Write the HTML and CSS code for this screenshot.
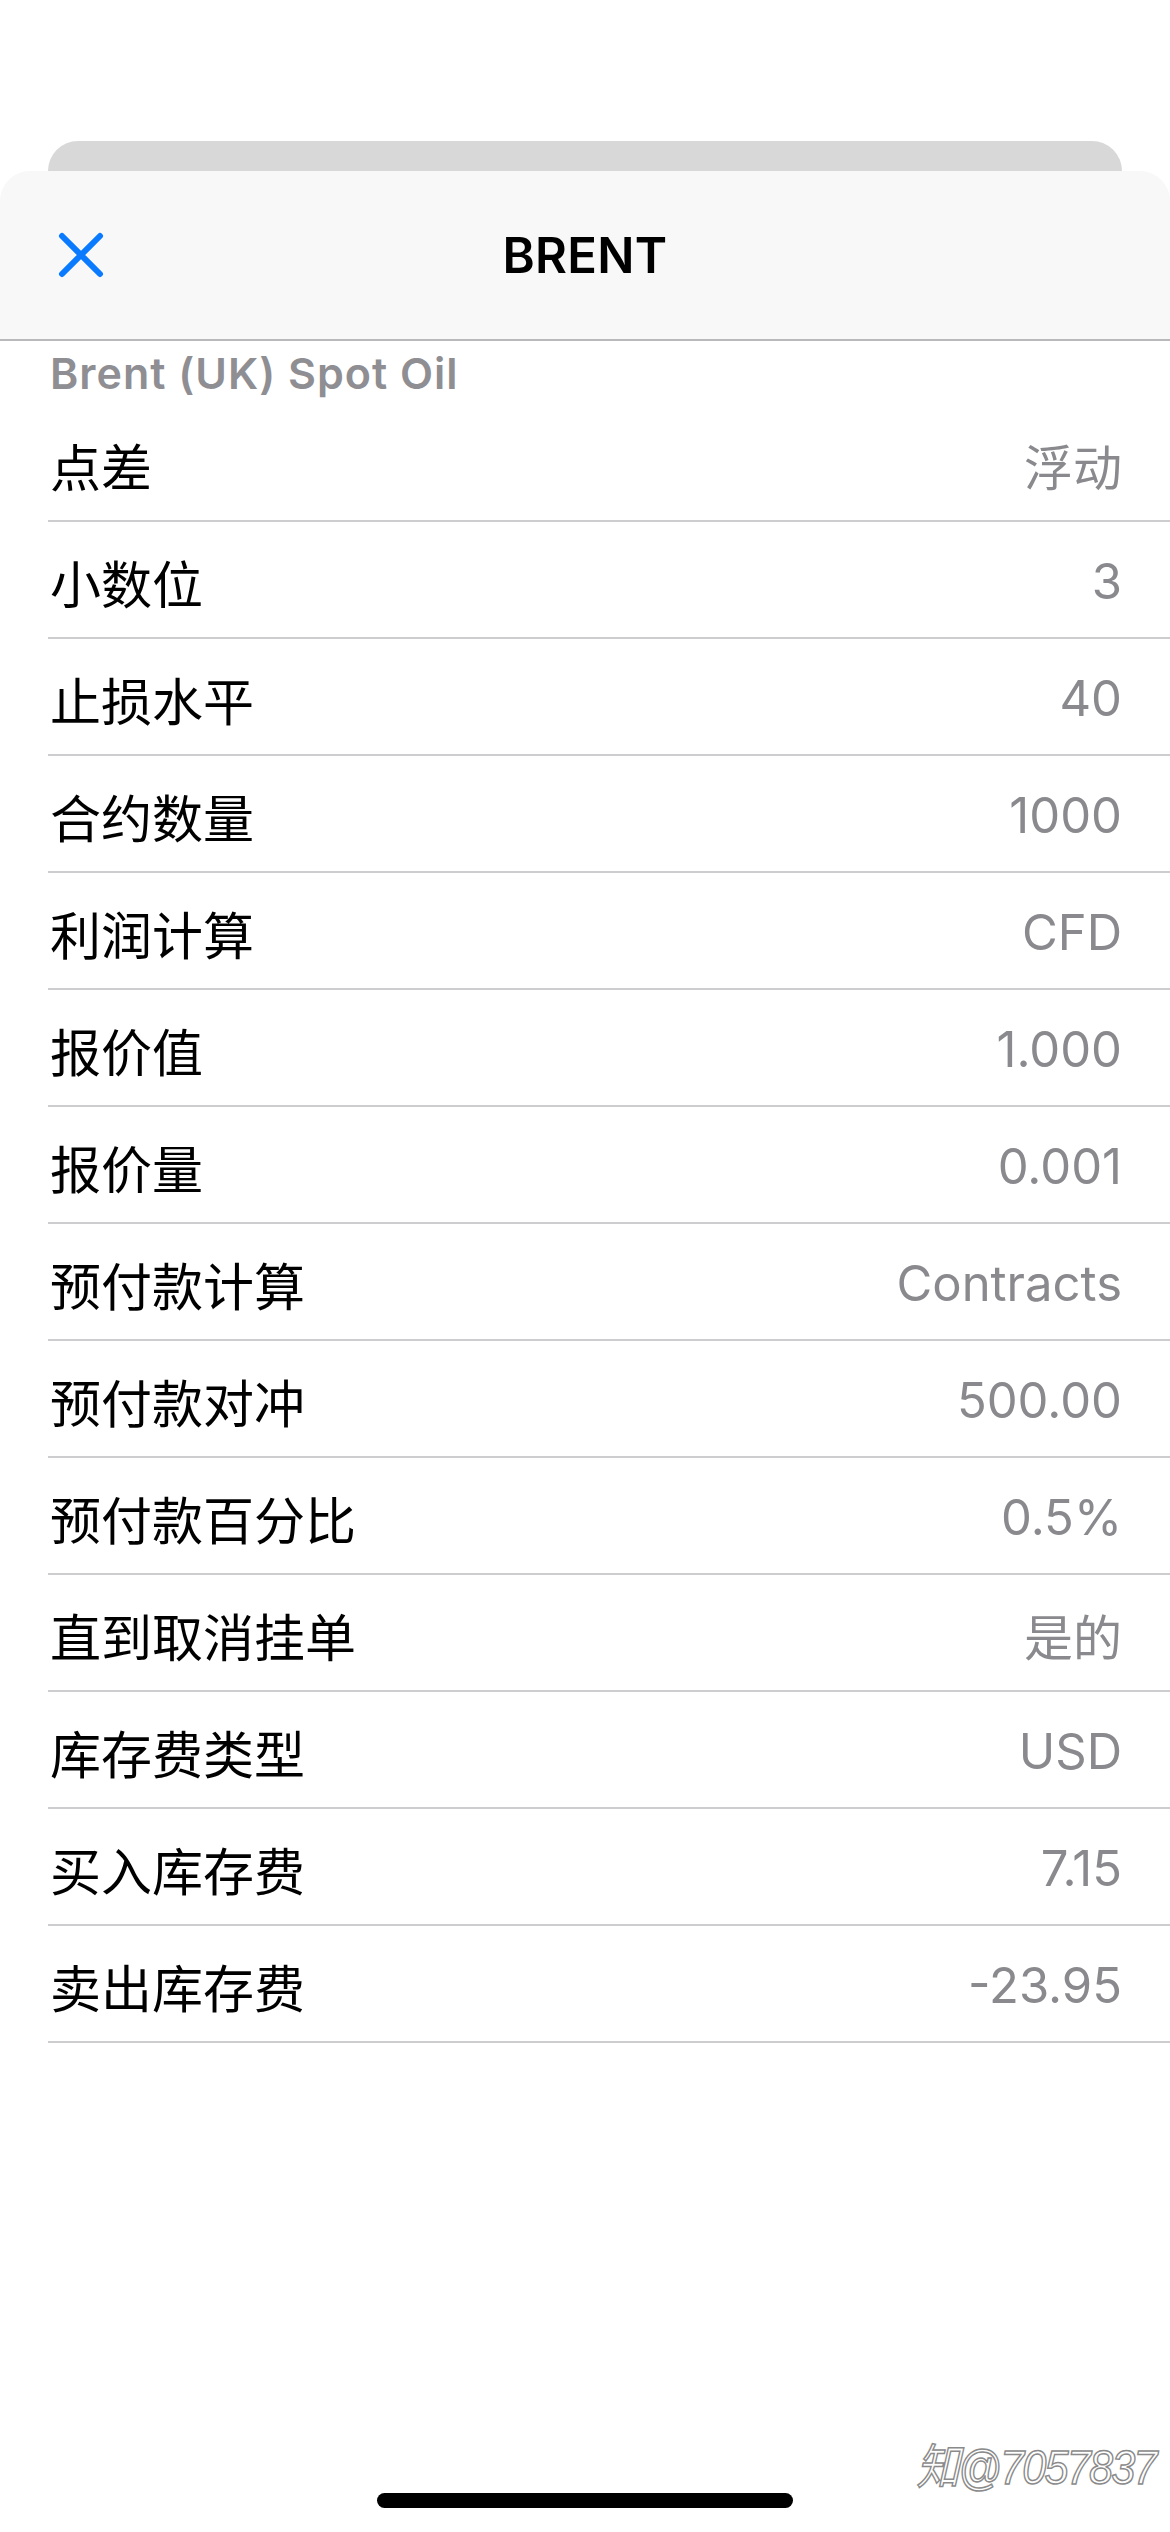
FILE: index.html
```html
<!DOCTYPE html>
<html lang="zh">
<head>
  <meta charset="UTF-8" />
  <meta name="viewport" content="width=device-width, initial-scale=1.0" />
  <title>BRENT</title>
  <link rel="stylesheet" href="styles.css">
</head>
<body>
  <div class="screen">
    <div class="back-card"></div>

    <div class="sheet">
      <div class="sheet-header">
        <button class="close-btn" aria-label="关闭">
          <svg width="46" height="46" viewBox="0 0 46 46">
            <path d="M4 4 L42 42 M42 4 L4 42" stroke="#0a7aff" stroke-width="6" stroke-linecap="round" fill="none"/>
          </svg>
        </button>
        <h1 class="title">BRENT</h1>
        <div class="header-spacer"></div>
      </div>

      <div class="subtitle">Brent (UK) Spot Oil</div>

      <div class="spec-list">
        <div class="spec-row"><span class="spec-label">点差</span><span class="spec-value">浮动</span></div>
        <div class="spec-row"><span class="spec-label">小数位</span><span class="spec-value">3</span></div>
        <div class="spec-row"><span class="spec-label">止损水平</span><span class="spec-value">40</span></div>
        <div class="spec-row"><span class="spec-label">合约数量</span><span class="spec-value">1000</span></div>
        <div class="spec-row"><span class="spec-label">利润计算</span><span class="spec-value">CFD</span></div>
        <div class="spec-row"><span class="spec-label">报价值</span><span class="spec-value">1.000</span></div>
        <div class="spec-row"><span class="spec-label">报价量</span><span class="spec-value">0.001</span></div>
        <div class="spec-row"><span class="spec-label">预付款计算</span><span class="spec-value">Contracts</span></div>
        <div class="spec-row"><span class="spec-label">预付款对冲</span><span class="spec-value">500.00</span></div>
        <div class="spec-row"><span class="spec-label">预付款百分比</span><span class="spec-value">0.5%</span></div>
        <div class="spec-row"><span class="spec-label">直到取消挂单</span><span class="spec-value">是的</span></div>
        <div class="spec-row"><span class="spec-label">库存费类型</span><span class="spec-value">USD</span></div>
        <div class="spec-row"><span class="spec-label">买入库存费</span><span class="spec-value">7.15</span></div>
        <div class="spec-row"><span class="spec-label">卖出库存费</span><span class="spec-value">-23.95</span></div>
      </div>
    </div>

    <div class="home-indicator"></div>
    <div class="watermark">知@7057837</div>
  </div>
</body>
</html>
```

FILE: styles.css
```css
* { box-sizing: border-box; }
body { margin: 0; background: #fff; font-family: Inter, "Noto Sans CJK SC", sans-serif; }

.screen { position: relative; width: 1170px; min-height: 2532px; display: flex; flex-direction: column; background: #fff; overflow: hidden; }

.back-card { margin: 141px 48px 0; height: 30px; background: #d8d8d8; border-radius: 30px 30px 0 0; }

.sheet { background: #fff; border-radius: 30px 30px 0 0; overflow: hidden; }
.sheet-header { height: 170px; display: flex; align-items: center; padding: 0 58px; background: #f8f8f8; border-bottom: 2px solid #b9b9bb; }
.close-btn { width: 46px; height: 46px; padding: 0; border: none; background: none; display: flex; }
.header-spacer { width: 46px; }
.title { flex: 1; margin: 0; text-align: center; font-size: 49px; font-weight: 600; color: #000; letter-spacing: 0.3px; }

.subtitle { padding: 7px 50px; line-height: 50px; font-size: 43px; font-weight: 600; letter-spacing: 1px; color: #8e8e93; }

.spec-list { padding-left: 48px; }
.spec-row { height: 117px; display: flex; align-items: center; justify-content: space-between; padding: 4px 48px 0 2px; border-bottom: 2px solid #cdcdd0; }
.spec-label { font-family: "Noto Sans CJK SC", sans-serif; font-size: 51px; color: #000; }
.spec-value { font-size: 49px; color: #8a8a8e; }

.home-indicator { margin: auto auto 24px; width: 416px; height: 15px; border-radius: 8px; background: #000; }

.watermark { position: absolute; right: 14px; bottom: 34px; font-family: "Liberation Sans", "Noto Sans CJK SC", sans-serif; font-size: 48px; font-style: italic; color: #fff; -webkit-text-stroke: 1.5px #8a8a8a; letter-spacing: -2px; transform: scaleX(0.9); transform-origin: right bottom; }
```
